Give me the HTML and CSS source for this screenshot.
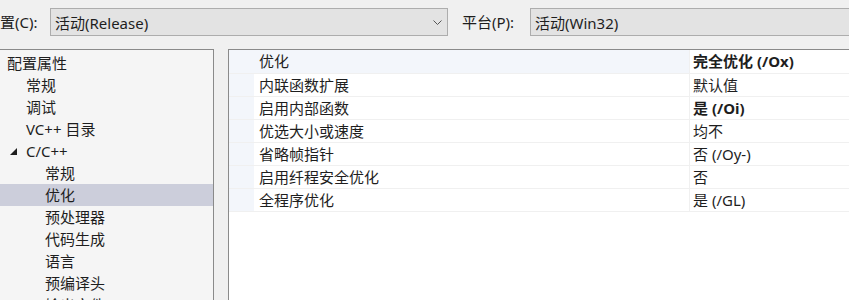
FILE: index.html
```html
<!DOCTYPE html>
<html lang="zh-CN">
<head>
  <meta charset="UTF-8" />
  <title>属性页</title>
  <link rel="stylesheet" href="styles.css">
</head>
<body>

<!-- Configuration / platform bar -->
<div class="topbar">
  <span class="label">置(C):</span>
  <div class="combo combo-config">
    <span>活动(Release)</span>
    <svg class="chevron" width="9" height="5" viewBox="0 0 9 5"><path d="M0.5 0.5 L4.5 4.5 L8.5 0.5" fill="none" stroke="#555" stroke-width="1"/></svg>
  </div>
  <span class="label label-platform">平台(P):</span>
  <div class="combo combo-platform">
    <span>活动(Win32)</span>
  </div>
</div>

<div class="main">
  <!-- Tree -->
  <div class="tree">
    <div class="node">配置属性</div>
    <div class="node lvl1">常规</div>
    <div class="node lvl1">调试</div>
    <div class="node lvl1">VC++ 目录</div>
    <div class="node lvl1 expanded">
      <svg class="twisty" width="7" height="7" viewBox="0 0 7 7"><polygon points="7,0 7,7 0,7" fill="#1e1e1e"/></svg>
      C/C++
    </div>
    <div class="node lvl2">常规</div>
    <div class="node lvl2 selected">优化</div>
    <div class="node lvl2">预处理器</div>
    <div class="node lvl2">代码生成</div>
    <div class="node lvl2">语言</div>
    <div class="node lvl2">预编译头</div>
    <div class="node lvl2">输出文件</div>
  </div>

  <!-- Property grid -->
  <div class="grid">
    <div class="row category">
      <div class="gutter"></div>
      <div class="name">优化</div>
      <div class="value bold">完全优化 (/Ox)</div>
    </div>
    <div class="row">
      <div class="gutter"></div>
      <div class="name">内联函数扩展</div>
      <div class="value">默认值</div>
    </div>
    <div class="row">
      <div class="gutter"></div>
      <div class="name">启用内部函数</div>
      <div class="value bold">是 (/Oi)</div>
    </div>
    <div class="row">
      <div class="gutter"></div>
      <div class="name">优选大小或速度</div>
      <div class="value">均不</div>
    </div>
    <div class="row">
      <div class="gutter"></div>
      <div class="name">省略帧指针</div>
      <div class="value">否 (/Oy-)</div>
    </div>
    <div class="row">
      <div class="gutter"></div>
      <div class="name">启用纤程安全优化</div>
      <div class="value">否</div>
    </div>
    <div class="row">
      <div class="gutter"></div>
      <div class="name">全程序优化</div>
      <div class="value">是 (/GL)</div>
    </div>
  </div>
</div>

</body>
</html>
```

FILE: styles.css
```css
body {
  margin: 0;
  padding: 0;
  background: #f0f0f0;
  color: #1e1e1e;
  font-family: "Noto Sans", "Noto Sans CJK SC", sans-serif;
  font-size: 15px;
  height: 300px;
  width: 849px;
  overflow: hidden;
}
.topbar {
  display: flex;
  align-items: center;
  height: 28px;
  padding-top: 8px;
  padding-bottom: 13px;
  white-space: nowrap;
}
.label {
  width: 50px;
  flex-shrink: 0;
  line-height: 28px;
}
.label-platform {
  width: 68px;
  margin-left: 14px;
}
.combo {
  box-sizing: border-box;
  height: 28px;
  background: #e3e3e3;
  border: 1px solid #adadad;
  display: flex;
  align-items: center;
  padding-left: 4px;
  flex-shrink: 0;
}
.combo-config {
  width: 398px;
  justify-content: space-between;
  padding-right: 5px;
}
.combo-platform {
  width: 330px;
}
.chevron {
  display: block;
}
.main {
  display: flex;
  height: 251px;
}
.tree {
  width: 213px;
  flex-shrink: 0;
  background: #f5f5f5;
  border-top: 1px solid #8a8a8a;
  border-right: 1px solid #8a8a8a;
  padding-top: 2px;
}
.node {
  height: 22px;
  line-height: 22px;
  padding-left: 7px;
  white-space: nowrap;
  display: flex;
  align-items: center;
}
.lvl1 {
  padding-left: 26px;
}
.lvl2 {
  padding-left: 45px;
}
.expanded {
  position: relative;
}
.twisty {
  position: absolute;
  left: 10px;
  top: 8px;
}
.selected {
  background: #cccedb;
}
.grid {
  flex: 1;
  margin-left: 14px;
  background: #fff;
  border-top: 1px solid #8a8a8a;
  border-left: 1px solid #8a8a8a;
}
.row {
  display: flex;
  height: 22px;
  line-height: 22px;
  border-bottom: 1px solid #f0f0f0;
  white-space: nowrap;
}
.row.category {
  height: 23px;
  line-height: 23px;
}
.gutter {
  width: 25px;
  background: #f3f6fb;
}
.name {
  width: 430px;
  padding-left: 5px;
  border-right: 1px solid #f0f0f0;
}
.category .name {
  background: #f3f6fb;
}
.value {
  flex: 1;
  padding-left: 3px;
}
.bold {
  font-weight: bold;
}
```
